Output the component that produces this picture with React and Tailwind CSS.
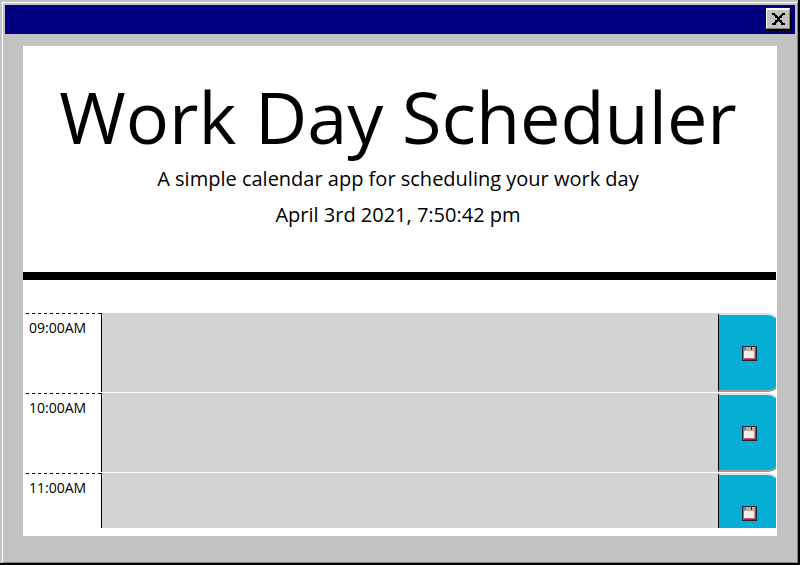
const HOURS = ["09:00AM", "10:00AM", "11:00AM"];

function CloseGlyph() {
  return (
    <svg width="13" height="12" viewBox="0 0 13 12" shapeRendering="crispEdges" fill="#000">
      <path d="M0 0h3v1h-3zM10 0h3v1h-3zM0 1h4v1h-4zM9 1h4v1h-4zM2 2h3v1h-3zM8 2h3v1h-3zM3 3h3v1h-3zM7 3h3v1h-3zM3 4h7v1h-7zM5 5h3v2h-3zM3 7h7v1h-7zM3 8h3v1h-3zM7 8h3v1h-3zM2 9h3v1h-3zM8 9h3v1h-3zM0 10h4v1h-4zM9 10h4v1h-4zM0 11h4v1h-4zM9 11h4v1h-4z" />
    </svg>
  );
}

function Floppy() {
  return (
    <svg width="15" height="15" viewBox="0 0 15 15" shapeRendering="crispEdges">
      <path d="M0 0h14l1 1v14H0z" fill="#20203f" />
      <path d="M1 1h1v13H1z" fill="#6b7890" />
      <path d="M2 1h1v4H2z" fill="#7b8494" />
      <path d="M3 1h10v4H3z" fill="#b4b3aa" />
      <path d="M3 1h1v3H3z" fill="#7b8494" />
      <path d="M9 1h1v3H9z" fill="#1c2445" />
      <path d="M10 1h1v3h-1z" fill="#d6b64e" />
      <path d="M12 2h1v11h-1z" fill="#c69b69" />
      <path d="M13 1h1v13h-1z" fill="#4a5596" />
      <path d="M2 5h10v7H2z" fill="#f3f2f1" />
      <path d="M3 8h8v1H3z" fill="#e6e4e4" />
      <path d="M2 12h10v1H2z" fill="#e2507a" />
      <path d="M2 13h10v1H2z" fill="#b01c4c" />
    </svg>
  );
}

function TimeBlock({ hour }) {
  return (
    <div className="flex h-20 shrink-0 pl-[3px]">
      <div className="h-[79px] w-[76px] shrink-0 border-r border-black">
        <svg className="block" width="75" height="1" shapeRendering="crispEdges">
          <line x1="0" y1="0.5" x2="75" y2="0.5" stroke="#000" strokeDasharray="3 3" />
        </svg>
        <div className="pl-[3px] pt-[3px] text-[14px] leading-[21px]">{hour}</div>
      </div>
      <div className="h-[79px] w-[616px] shrink-0 bg-[#d3d3d3]" />
      <button className="flex h-[79px] w-[62px] shrink-0 items-center rounded-r-[12px] border-y-2 border-l border-r-2 border-b-[#999] border-l-black border-r-[#999] border-t-[#e3e3e3] bg-[#06aed5] pl-[23px] pt-px">
        <Floppy />
      </button>
    </div>
  );
}

export default function App() {
  return (
    <div className="h-[565px] w-[800px] overflow-hidden border-b-2 border-r-2 border-black bg-[#c3c3c3] pl-[2px] pt-[2px] font-['Open_Sans',sans-serif] text-black">
      <div className="h-[561px] w-[796px] border border-b-[#818181] border-l-white border-r-[#818181] border-t-white px-[2px] pt-[2px]">
        <div className="flex h-[29px] w-[790px] justify-end bg-[#000081] pr-[3px] pt-[3px]">
          <div className="h-[23px] w-[26px] border-b-2 border-r-2 border-black">
            <div className="flex h-[21px] w-[24px] border-b border-l border-r border-t-2 border-b-[#818181] border-l-white border-r-[#818181] border-t-white bg-[#c3c3c3] pl-[5px] pt-[3px]">
              <CloseGlyph />
            </div>
          </div>
        </div>
        <div className="ml-[18px] mt-[12px] h-[490px] w-[754px] bg-white">
          <div className="flex h-[482px] w-[753px] flex-col overflow-hidden">
            <header className="h-[234px] shrink-0 border-b-8 border-black pt-[25px] text-center">
              <h1 className="-ml-[3px] whitespace-nowrap text-[72px] font-normal leading-[90px]">Work Day Scheduler</h1>
              <p className="-ml-[3px] pt-[8px] text-[20px] leading-[20px]">A simple calendar app for scheduling your work day</p>
              <p className="-ml-[3px] mt-4 text-[20px] leading-[20px]">April 3rd 2021, 7:50:42 pm</p>
            </header>
            <main className="pt-[33px]">
              {HOURS.map((hour) => (
                <TimeBlock key={hour} hour={hour} />
              ))}
            </main>
          </div>
        </div>
      </div>
    </div>
  );
}
